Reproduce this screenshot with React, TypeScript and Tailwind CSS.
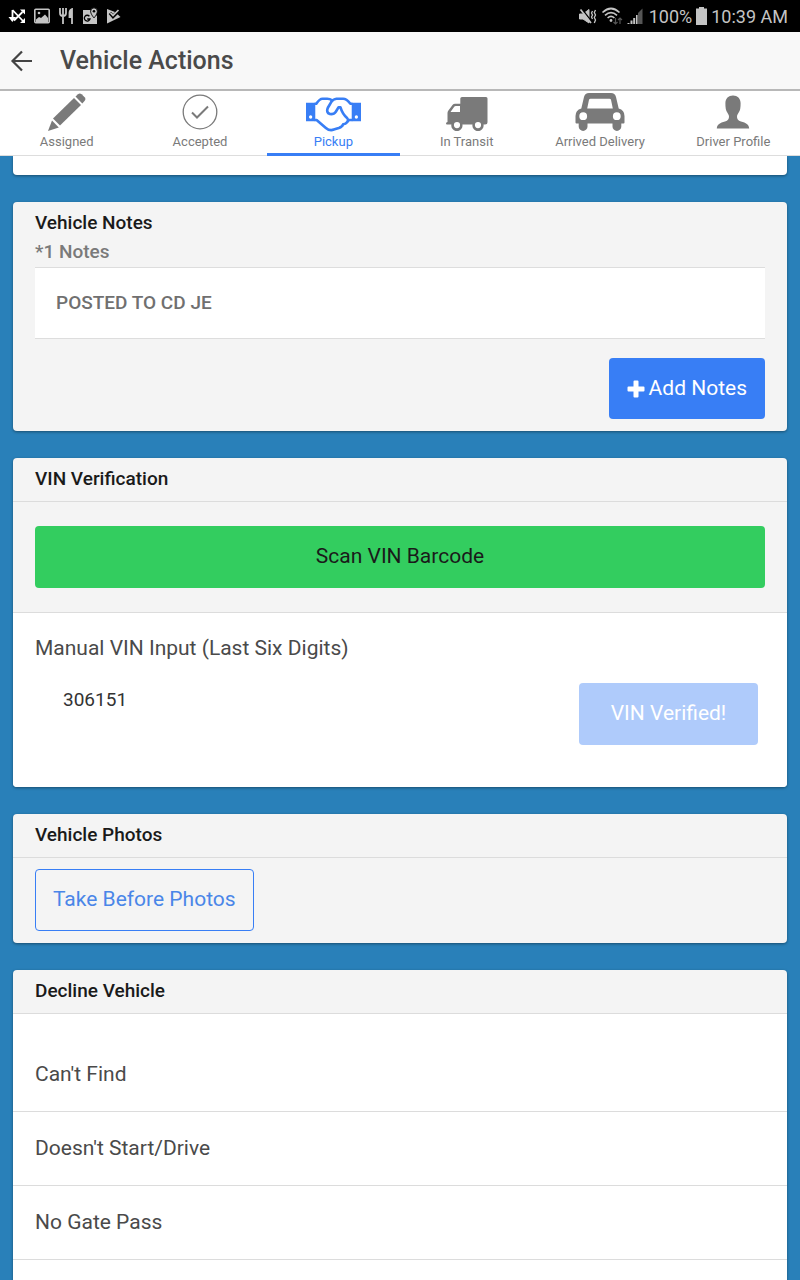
import React, { useState } from 'react';

type TabId = 'assigned' | 'accepted' | 'pickup' | 'transit' | 'delivery' | 'profile';

const PencilIcon = () => (
  <svg viewBox="0 0 38 38" className="w-[38px] h-[38px] fill-current" aria-hidden="true">
    <path d="M27.5 3.5 L30 1.2 Q31.8 -0.3 33.6 1.3 L36.6 4.2 Q38.2 6 36.7 7.8 L34.3 10.4 Z" />
    <path d="M26 5 L33 12 L12 32.6 L5 25.6 Z" />
    <path d="M4 27.6 L10.8 34.4 L0 38 Z" />
  </svg>
);

const CheckCircleIcon = () => (
  <svg viewBox="0 0 36 36" className="w-9 h-9 fill-none stroke-current" aria-hidden="true">
    <circle cx="18" cy="18" r="16.8" strokeWidth="1.3" />
    <path d="M10 18.5 L15 23.5 L26 12.5" strokeWidth="2" />
  </svg>
);

const HandshakeIcon = () => (
  <svg viewBox="0 0 166 108" className="w-[55px] h-9 mt-1" aria-hidden="true">
    <path
      fillRule="evenodd"
      className="fill-current"
      d="M0 20 H28 V76 H0 Z M14 58 A5 5 0 1 0 14 68 A5 5 0 1 0 14 58 Z M138 20 H166 V76 H138 Z M152 58 A5 5 0 1 0 152 68 A5 5 0 1 0 152 58 Z"
    />
    <path
      className="fill-none stroke-current"
      strokeWidth="8"
      strokeLinejoin="round"
      d="M26 23 H31 Q41 8 50 8 H64 Q72 8 79 13 M26 72 H32 L60 96 Q72 106 84 101 L99 96 Q110 92 112 85 Q124 84 127 72 H140 M140 23 H134 Q122 8 112 8 H92 Q82 9 76 18 L66 35 Q60 50 72 54 Q84 56 90 47 L98 34 H104 Q110 54 124 66 Q129 72 126 78"
    />
  </svg>
);

const TruckIcon = () => (
  <svg viewBox="0 0 42 34" className="w-[42px] h-[34px] mt-1 fill-current" aria-hidden="true">
    <path
      fillRule="evenodd"
      d="M16 0 H40 Q41.5 0 41.5 1.5 V25 Q41.5 27.5 39 27.5 H37.5 A5.6 5.6 0 1 1 26.5 27.5 H16.4 A5.6 5.6 0 1 1 5.4 27.5 H1 Q0 27.5 0 26.5 Q0 25 1.5 25 V16 Q1.5 14.8 2.4 13.6 L6.5 8 Q7.6 6.7 9 6.7 H14.3 V1.5 Q14.3 0 16 0 Z M4.5 15 H14 V9 H9.8 Q8.8 9 8.2 9.8 Z M11 25 A3.1 3.1 0 1 0 11 31.2 A3.1 3.1 0 1 0 11 25 Z M32 25 A3.1 3.1 0 1 0 32 31.2 A3.1 3.1 0 1 0 32 25 Z"
    />
  </svg>
);

const CarIcon = () => (
  <svg viewBox="0 0 50 38" className="w-[50px] h-[38px] fill-current" aria-hidden="true">
    <path
      fillRule="evenodd"
      d="M14 0 H36 Q40 0 41 4 L43.7 15.5 Q49.5 17 49.5 23 V29.5 Q49.5 30.5 48.5 30.5 H46.3 V33.5 A4.4 4.4 0 0 1 37.5 33.5 V30.5 H12.5 V33.5 A4.4 4.4 0 0 1 3.7 33.5 V30.5 H1.5 Q0.5 30.5 0.5 29.5 V23 Q0.5 17 6.3 15.5 L9 4 Q10 0 14 0 Z M15.5 5.7 Q14.3 5.7 14 6.8 L12.2 15.5 H37.8 L36 6.8 Q35.7 5.7 34.5 5.7 Z M8.2 19.3 A3.9 3.9 0 1 0 8.2 27.1 A3.9 3.9 0 1 0 8.2 19.3 Z M41.8 19.3 A3.9 3.9 0 1 0 41.8 27.1 A3.9 3.9 0 1 0 41.8 19.3 Z"
    />
  </svg>
);

const PersonIcon = () => (
  <svg viewBox="0 0 34 34" className="w-[34px] h-[34px] fill-current" aria-hidden="true">
    <path d="M17 0.5 C21.5 0.5 24.6 3.5 24.6 8 C24.6 10 24.6 12 24.2 14 C23.8 16.5 21.3 19.3 21 21 C20.8 24 22 25.5 25 26.5 C30 28 32.8 29 33.2 33.5 H0.8 C1.2 29 4 28 9 26.5 C12 25.5 13.2 24 13 21 C12.7 19.3 10.2 16.5 9.8 14 C9.4 12 9.4 10 9.4 8 C9.4 3.5 12.5 0.5 17 0.5 Z" />
  </svg>
);

const tabs: { id: TabId; label: string; icon: React.ReactNode }[] = [
  { id: 'assigned', label: 'Assigned', icon: <PencilIcon /> },
  { id: 'accepted', label: 'Accepted', icon: <CheckCircleIcon /> },
  { id: 'pickup', label: 'Pickup', icon: <HandshakeIcon /> },
  { id: 'transit', label: 'In Transit', icon: <TruckIcon /> },
  { id: 'delivery', label: 'Arrived Delivery', icon: <CarIcon /> },
  { id: 'profile', label: 'Driver Profile', icon: <PersonIcon /> },
];

const declineReasons = ["Can't Find", "Doesn't Start/Drive", 'No Gate Pass'];

const StatusBar = () => (
  <div className="h-8 shrink-0 bg-black text-[#c4c4c4] flex items-center justify-between pl-2 pr-3">
    <div className="flex items-center gap-2">
      {/* Missed connection */}
      <svg viewBox="0 0 18 16" className="w-[18px] h-4 fill-none stroke-white" strokeWidth="1.8" aria-hidden="true">
        <path d="M4.5 2 V11 M4.5 2 L15 13 M6 12.5 L14.5 4" />
        <path d="M0.5 9 H8 L4.3 14 Z M12 1.5 H17 V6.5 Z M17 10 V15 H12 Z" fill="#fff" stroke="none" />
      </svg>
      {/* Picture */}
      <svg viewBox="0 0 16 16" className="w-4 h-4" aria-hidden="true">
        <rect x="0.8" y="1.3" width="14.4" height="13.4" rx="1" fill="none" stroke="currentColor" strokeWidth="1.6" />
        <circle cx="5" cy="5" r="1.3" fill="currentColor" />
        <path d="M2 11.5 L5 9 L7 10 L11 6.5 L14 10 V14 H2 Z" fill="currentColor" />
      </svg>
      {/* Fork and knife */}
      <svg viewBox="0 0 16 16" className="w-4 h-4 fill-none stroke-current" strokeWidth="1.8" aria-hidden="true">
        <path d="M2 0 V5 Q2 8 5 8 Q8 8 8 5 V0 M5 0 V16" />
        <path d="M14 16 V1 Q11.5 2 11.5 5 V9 H14" fill="currentColor" />
      </svg>
      {/* Maps */}
      <svg viewBox="0 0 16 18" className="w-4 h-[18px]" aria-hidden="true">
        <path d="M1 3 H9 L15 9 V17 H1 Z" fill="currentColor" />
        <path d="M7.4 9.2 A2.9 2.9 0 1 0 8 12 H5.2" fill="none" stroke="#000" strokeWidth="1.3" />
        <path d="M12 0.8 A3.4 3.4 0 0 1 15.4 4.2 C15.4 7 12 11 12 11 C12 11 8.6 7 8.6 4.2 A3.4 3.4 0 0 1 12 0.8 Z" fill="currentColor" stroke="#000" strokeWidth="1" />
        <circle cx="12" cy="4.3" r="1.3" fill="#000" />
      </svg>
      {/* Play with tick */}
      <svg viewBox="0 0 15 16" className="w-[15px] h-4" aria-hidden="true">
        <path d="M1 1 L9 4 L14.5 9 L1 15.5 Z" fill="currentColor" />
        <path d="M4 5 L7 8.5 L13.5 2" fill="none" stroke="#000" strokeWidth="3.4" />
        <path d="M4.5 5 L7 7.5 L12.5 2" fill="none" stroke="currentColor" strokeWidth="1.7" />
      </svg>
    </div>
    <div className="flex items-center gap-1">
      {/* Muted, vibrating */}
      <svg viewBox="0 0 18 17" className="w-[18px] h-[17px] fill-none stroke-current" aria-hidden="true">
        <path d="M0.5 6 H4 L10 1.5 V15 L4 11 H0.5 Z" fill="currentColor" />
        <path d="M2.5 0.5 L13 14" stroke="#000" strokeWidth="1.4" />
        <path d="M1.5 1.5 L12 15" strokeWidth="1.7" />
        <path d="M13.5 3 L12.5 5 L13.5 7 L12.5 9 L13.5 11 M16.5 2 L15.3 4.5 L16.5 7 L15.3 9.5 L16.5 12 L15.3 15" strokeWidth="1.3" />
      </svg>
      {/* Wifi */}
      <svg viewBox="0 0 22 18" className="w-[22px] h-[18px] fill-none stroke-current" strokeWidth="1.7" aria-hidden="true">
        <path d="M1.5 5.5 Q10 -2.5 18.5 5.5 M4 8.3 Q10 2.8 16 8.3 M6.6 11 Q10 7.8 13.4 11" />
        <circle cx="10" cy="13.5" r="1.4" fill="currentColor" stroke="none" />
        <path d="M14.5 11 V17 M12.5 15 L14.5 17 L16.5 15 M19 17 V11 M17 13 L19 11 L21 13" stroke="#555" strokeWidth="1.2" />
      </svg>
      {/* Signal */}
      <svg viewBox="0 0 16 16" className="w-4 h-4" aria-hidden="true">
        <path d="M11 5 L15.5 0.5 V16 H11 Z" fill="#555" />
        <path d="M0.5 15 H2.5 V16 H0.5 Z M3.5 12.5 H5.5 V16 H3.5 Z M6.2 10 H8.2 V16 H6.2 Z M9 7 H10.6 V16 H9 Z" fill="currentColor" />
      </svg>
      <span className="pl-0.5 pt-px text-lg leading-8">100%</span>
      <svg viewBox="0 0 11 18" className="w-[11px] h-[18px] fill-current" aria-hidden="true">
        <path d="M3 0 H8 V1.5 H11 V18 H0 V1.5 H3 Z" />
      </svg>
      <span className="pt-px text-lg leading-8">10:39 AM</span>
    </div>
  </div>
);

interface CardProps {
  title: string;
  divided?: boolean;
  children: React.ReactNode;
}

const Card: React.FC<CardProps> = ({ title, divided = true, children }) => (
  <section className="bg-[#f4f4f4] rounded-sm shadow-[0_1px_3px_rgba(0,0,0,0.4)]">
    <h2
      className={`px-[22px] text-[19px] font-medium text-[#1a1a1a] leading-[41px] ${
        divided ? 'h-11 border-b border-[#dcdcdc]' : ''
      }`}
    >
      {title}
    </h2>
    {children}
  </section>
);

export default function App() {
  const [activeTab, setActiveTab] = useState<TabId>('pickup');
  const [vin, setVin] = useState('306151');

  return (
    <div className="h-screen flex flex-col overflow-hidden bg-[#2980b9] font-['Roboto',sans-serif] text-[#4a4a4a]">
      <StatusBar />

      <header className="h-[59px] shrink-0 flex items-center bg-[#f8f8f8] border-b-2 border-[#b8b8b8] pl-2.5">
        <button type="button" aria-label="Back" className="w-6 h-6">
          <svg viewBox="0 0 24 24" className="w-6 h-6 fill-none stroke-[#444]" strokeWidth="2.2" aria-hidden="true">
            <path d="M22 12 H3 M12 2.5 L2.5 12 L12 21.5" />
          </svg>
        </button>
        <h1 className="pl-[26px] text-[25px] leading-8 font-medium">Vehicle Actions</h1>
      </header>

      <nav className="h-[65px] shrink-0 grid grid-cols-6 bg-white shadow-[inset_0_-1px_0_#ddd]">
        {tabs.map((tab) => (
          <button
            key={tab.id}
            type="button"
            onClick={() => setActiveTab(tab.id)}
            className={`pt-px flex flex-col items-center border-b-[3px] ${
              activeTab === tab.id ? 'text-[#387ef5] border-[#387ef5]' : 'text-[#7a7a7a] border-transparent'
            }`}
          >
            <span className="h-10 flex items-center justify-center">{tab.icon}</span>
            <span className="text-[13px] leading-5 whitespace-nowrap">{tab.label}</span>
          </button>
        ))}
      </nav>

      <main className="flex-1 min-h-0 overflow-hidden px-[13px] flex flex-col gap-[27px] *:shrink-0">
        <div className="h-[19px] bg-white rounded-b-sm shadow-[0_1px_3px_rgba(0,0,0,0.4)]" />

        <Card title="Vehicle Notes" divided={false}>
          <div className="px-[22px] pb-3">
            <p className="h-6 leading-[18px] text-[19px] font-medium text-[#7a7a7a]">*1 Notes</p>
            <p className="px-[21px] bg-white border-y border-[#ddd] text-[19px] leading-[70px] font-medium text-[#707070]">
              POSTED TO CD JE
            </p>
            <div className="pt-[19px] flex justify-end">
              <button
                type="button"
                className="h-[61px] px-[18px] flex items-center gap-1 rounded bg-[#387ef5] text-[21px] text-white"
              >
                <svg viewBox="0 0 18 18" className="w-[18px] h-[18px] fill-current" aria-hidden="true">
                  <path d="M7.5 0.5 H10.5 Q11.5 0.5 11.5 1.5 V6.5 H16.5 Q17.5 6.5 17.5 7.5 V10.5 Q17.5 11.5 16.5 11.5 H11.5 V16.5 Q11.5 17.5 10.5 17.5 H7.5 Q6.5 17.5 6.5 16.5 V11.5 H1.5 Q0.5 11.5 0.5 10.5 V7.5 Q0.5 6.5 1.5 6.5 H6.5 V1.5 Q6.5 0.5 7.5 0.5 Z" />
                </svg>
                Add Notes
              </button>
            </div>
          </div>
        </Card>

        <Card title="VIN Verification">
          <div className="px-[22px] py-6 border-b border-[#dcdcdc]">
            <button type="button" className="w-full h-[62px] rounded bg-[#33cd5f] text-[21px] text-[#1a1a1a]">
              Scan VIN Barcode
            </button>
          </div>
          <div className="h-[174px] px-[22px] pt-5 bg-white rounded-b-sm">
            <label htmlFor="vin" className="block text-[21px] leading-[30px]">
              Manual VIN Input (Last Six Digits)
            </label>
            <div className="pt-5 pl-7 pr-[7px] flex items-start justify-between">
              <input
                id="vin"
                type="text"
                inputMode="numeric"
                maxLength={6}
                value={vin}
                onChange={(e) => setVin(e.target.value)}
                className="w-48 h-8 text-[19px] text-[#333] outline-none"
              />
              <button type="button" disabled className="w-[179px] h-[62px] rounded bg-[#afcbfb] text-[21px] text-white">
                VIN Verified!
              </button>
            </div>
          </div>
        </Card>

        <Card title="Vehicle Photos">
          <div className="px-[22px] pt-[11px] pb-3">
            <button
              type="button"
              className="h-[62px] px-[17px] rounded border border-[#387ef5] text-[21px] text-[#4a86e8]"
            >
              Take Before Photos
            </button>
          </div>
        </Card>

        <Card title="Decline Vehicle">
          <ul className="pt-6 pb-20 bg-white">
            {declineReasons.map((reason) => (
              <li key={reason} className="border-b border-[#dcdcdc]">
                <button type="button" className="w-full h-[73px] px-[22px] text-left text-[21px]">
                  {reason}
                </button>
              </li>
            ))}
          </ul>
        </Card>
      </main>
    </div>
  );
}
